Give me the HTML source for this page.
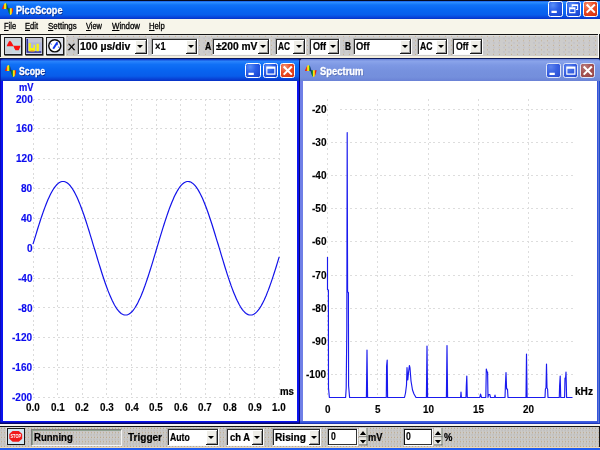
<!DOCTYPE html>
<html lang="en"><head><meta charset="utf-8"><title>PicoScope</title>
<style>
html,body{margin:0;padding:0}
body{width:600px;height:450px;overflow:hidden;position:relative;background:#fff;font-family:"Liberation Sans", sans-serif;-webkit-font-smoothing:antialiased}
.abs,.t,.cb,.tb,.cap,.bar{position:absolute}
.t{white-space:nowrap;transform-origin:0 0;display:block}
#txt{position:absolute;left:0;top:0;width:600px;height:450px;will-change:transform}
.t u{text-decoration:underline;text-underline-offset:1px;text-decoration-thickness:1px}
#title{left:0;top:0;width:600px;height:19.3px;background:linear-gradient(#060a20 0,#060a20 3%,#1a5ce4 5.5%,#2a8cff 13%,#1072f8 26%,#0866f2 50%,#085eec 78%,#0846dc 90%,#0634c8 100%)}
#menu{left:0;top:19.2px;width:600px;height:15.3px;background:#f7f5ea}
#tbar{left:0;top:34px;width:597.8px;height:21.6px;border-top:1px solid #151515;box-sizing:border-box;box-shadow:inset 0 1.3px 0 rgba(255,255,255,.35)}
.dith{background-color:#cbcac8;background-image:radial-gradient(circle at 1.5px 1.3px,#b9a282 0,#b9a282 .45px,rgba(185,162,130,0) .95px),radial-gradient(circle at 1px 3.5px,#b6b6b8 0,#b6b6b8 .4px,rgba(182,182,184,0) .9px);background-size:3px 4.5px,3px 4.5px}
#tbar.dith{background-color:#cdcccb;background-image:radial-gradient(circle at 1.5px 1.3px,#c2ad8e 0,#c2ad8e .4px,rgba(194,173,142,0) .9px),radial-gradient(circle at 4px 3.5px,#bcbcc8 0,#bcbcc8 .4px,rgba(188,188,200,0) .9px);background-size:6px 4.5px,5px 4.5px}
#tsep{left:0;top:55.6px;width:599px;height:2px;background:#f3eedd}
#tr1{left:597.8px;top:35px;width:1.1px;height:22.5px;background:#fbfbfb}
#tr2{left:598.9px;top:34px;width:1.1px;height:24.5px;background:#141414}
#tsep2{left:0;top:57.5px;width:600px;height:3.5px;background:#0c1a5a}
.cb{background:#fff;box-sizing:border-box;border:1px solid;border-color:#a9a9a9 #fbfbfb #fbfbfb #a9a9a9;box-shadow:inset 1px 1px 0 #2b2b2b}
.ed{box-shadow:inset 1px 1px 0 #111,inset -1px -1px 0 #333}
.ab{position:absolute;right:0;top:1px;bottom:0;width:11.3px;background:#efeee8;box-shadow:inset -1px -1px 0 #1a1a1a,inset 1px 1px 0 #fff,inset -2px -2px 0 #9a9a9a}
.ab b{position:absolute;left:2.1px;top:5.5px;width:0;height:0;border:3.3px solid transparent;border-top:3.4px solid #000;border-bottom:0}
.tb{top:37.3px;width:18.2px;height:17.8px;box-sizing:border-box;border:1.4px solid #1a1a1a;background:#dde;box-shadow:.5px .7px 0 #2a2a2a}
.tb svg{display:block}
.win{position:absolute;box-sizing:border-box}
.wt{position:absolute;left:0;top:0;right:0;height:22.5px}
#w1{left:0;top:58.7px;width:299.6px;height:365.3px;background:#0a12ee;border-radius:3px 3px 0 0}
#w1 .wt{background:linear-gradient(#0a2cc0 0,#2a84fc 10%,#1070f6 25%,#0864f0 52%,#085cea 78%,#0840d4 92%,#0830c4 100%);border-radius:3px 3px 0 0}
#w1 .cl{position:absolute;left:2.8px;top:22.2px;width:294px;height:340.6px;background:#fff}
#w2{left:300.2px;top:58.7px;width:299.8px;height:365.3px;background:#6f7fe6;box-shadow:inset -1px 0 0 #2050c8,inset -2px 0 0 #6276da,inset -3.2px -2.7px 0 #3454dc;border-radius:3px 3px 0 0}
#w2 .wt{background:linear-gradient(#6a82d8 0,#8aa4ea 10%,#7d98e4 28%,#7691de 55%,#748fdc 82%,#6a82d6 100%);border-radius:3px 3px 0 0}
#w2 .cl{position:absolute;left:2.9px;top:22.2px;width:293.6px;height:340.6px;background:#fff}
#w1:after{content:"";position:absolute;left:0;right:0;bottom:0;top:0;border-radius:3px 3px 0 0;box-shadow:inset -.9px -1.4px 0 #06066a,inset .6px 0 0 #0a0aa0;pointer-events:none}
#w2:after{content:"";position:absolute;left:0;right:0;bottom:0;height:1.2px;background:#1e36b8}
.cap{border-radius:2.5px;box-sizing:border-box;border:1px solid #fff;overflow:hidden}
.cap svg{display:block;margin:-1px}
.capb{background:radial-gradient(circle at 30% 22%,#5a8ef8 0,#2a5ee8 42%,#1440cc 100%)}
.capx{background:radial-gradient(circle at 30% 22%,#f49474 0,#ec4c24 42%,#d42e0c 100%)}
.capb.ina{background:radial-gradient(circle at 30% 22%,#5c82ee 0,#3a62e2 45%,#2a4cd0 100%);border-color:#dfe6fa}
.capx.ina{background:radial-gradient(circle at 30% 22%,#b87c7c 0,#a45252 45%,#984444 100%);border-color:#dfe6fa}
#gap1{left:0;top:424px;width:600px;height:2px;background:#f7f5ee}
#sline{left:0;top:426px;width:600px;height:1px;background:#141414}
#sbar{left:0;top:427px;width:600px;height:21.3px;box-sizing:border-box;border-right:1.1px solid #141414}
#bot{left:0;top:447.3px;width:600px;height:2.7px;background:linear-gradient(#efd9b4 0,#efd9b4 30%,#1f5cf0 42%,#1f5cf0 100%)}
#run{left:31px;top:429px;width:90.5px;height:17px;box-sizing:border-box;border:1px solid;border-color:#7a7a7a #f4f4f4 #f4f4f4 #7a7a7a;box-shadow:inset 1px 1px 0 #8fa08f}
#stopb{left:7.2px;top:428.2px;width:18.4px;height:17.4px;box-sizing:border-box;border:1.4px solid #161616;background:#d2e6f0;box-shadow:-.6px -.6px 0 #eee;will-change:transform}
#stopb svg{display:block}
</style></head><body>

<div class="bar" id="title"></div>
<svg class="abs" style="left:1.6px;top:2.9px" width="11.6" height="12" viewBox="0 0 11.6 12"><defs><linearGradient id="rg1" x1="0" x2="1" y1="0" y2="0"><stop offset="0" stop-color="#e80c0c"/><stop offset=".22" stop-color="#f02810"/><stop offset=".4" stop-color="#f8e810"/><stop offset=".58" stop-color="#f0e010"/><stop offset=".7" stop-color="#189030"/><stop offset=".86" stop-color="#103090"/><stop offset="1" stop-color="#0a1868"/></linearGradient><linearGradient id="rh1" x1="0" x2="1" y1="0" y2="0"><stop offset="0" stop-color="#0a1868"/><stop offset=".2" stop-color="#106848"/><stop offset=".36" stop-color="#189030"/><stop offset=".48" stop-color="#f8e810"/><stop offset=".64" stop-color="#f8d810"/><stop offset=".8" stop-color="#f02810"/><stop offset="1" stop-color="#e00c0c"/></linearGradient></defs><path d="M0 6 C0.8 3.6 2 0 3.6 0 C5.2 0 6 3.8 6.6 6 Z" fill="url(#rg1)"/><path d="M5.4 5.2 H11.6 C11 8 10.2 11.9 8.6 11.9 C7 11.9 6.2 8.2 5.4 5.2 Z" fill="url(#rh1)"/></svg>
<div class="cap capb" style="left:548.3px;top:1.4px;width:15.2px;height:15.2px"><svg width="15.2" height="15.2" viewBox="0 0 14.5 14.5"><path d="M3.3 9.3 H8.4 V11.4 H3.3 Z" fill="#fff"/></svg></div>
<div class="cap capb" style="left:565.6px;top:1.4px;width:15.2px;height:15.2px"><svg width="15.2" height="15.2" viewBox="0 0 14.5 14.5"><path d="M5.4 3 H11.6 V8.6 H9.6 V7.6 H10.6 V4.8 H6.4 V5.6 H5.4 Z M3 6 H9 V11.6 H3 Z M4 7.8 V10.6 H8 V7.8 Z" fill="#fff" fill-rule="evenodd"/></svg></div>
<div class="cap capx" style="left:583.1px;top:1.4px;width:15.2px;height:15.2px"><svg width="15.2" height="15.2" viewBox="0 0 14.5 14.5"><path d="M3.5 3.3 L11.3 11.1 M11.3 3.3 L3.5 11.1" stroke="#fff" stroke-width="2" stroke-linecap="butt"/></svg></div>
<div class="bar" id="menu"></div>
<div class="bar dith" id="tbar"></div><div class="bar" id="tsep"></div><div class="bar" id="tsep2"></div><div class="bar" id="tr1"></div><div class="bar" id="tr2"></div>
<div class="bar" style="left:0;top:35px;width:66.3px;height:21.3px;background:#f3f3ef"></div><div class="bar" style="left:0;top:35px;width:1px;height:22px;background:#222"></div>
<div class="tb" style="left:4.3px"><svg width="15.8" height="15.4" viewBox="0 0 16 15.5"><rect width="16" height="15.5" fill="#c6d8e0"/><path d="M0 0 H16 V4 H0 Z M0 11 H7 V15.5 H0 Z" fill="#cfd0d6" opacity=".7"/><path d="M1.7 8.2 C2.6 6.6 3.8 3 5 2.8 C6.2 3 7.6 6.4 8.8 8.2 Z" fill="#fa0f0f"/><path d="M8.4 7.7 H15.6 C15.4 9.4 14.6 10.8 13.8 12.3 H10.6 C9.8 11 9 9.4 8.4 7.7 Z" fill="#fa0f0f"/></svg></div>
<div class="tb" style="left:25.3px"><svg width="15.8" height="15.4" viewBox="0 0 16 15.5"><rect width="16" height="15.5" fill="#aeb6de"/><rect x="2" y="0" width="14" height="4.4" fill="#c4c6d4"/><path d="M1.3 1 V14.2 H15.4" stroke="#2c2c98" stroke-width="1.5" fill="none"/><path d="M2.7 13.4 V4.9 H4.9 V13.4 Z M4.9 13.4 V10.2 H7.6 V13.4 Z M7.6 13.4 V6.8 H9.2 V13.4 Z M10.6 13.4 V5.8 H13 V13.4 Z" fill="#f8f410"/><path d="M4.6 13.1 H8" stroke="#f09018" stroke-width="1.1"/></svg></div>
<div class="tb" style="left:46.3px"><svg width="15.8" height="15.4" viewBox="0 0 16 15.5"><rect width="16" height="15.5" fill="#dfe3ec"/><circle cx="7.9" cy="7.9" r="6.1" fill="#fff" stroke="#0c0c0c" stroke-width="1.5"/><path d="M6.3 10.8 L10.6 4.2" stroke="#1038f0" stroke-width="2"/><path d="M3.4 5.6 l1.4 .8 M11.2 9 l1.4 .5 M9.8 6.6 l1.4 .2" stroke="#1038f0" stroke-width=".9"/></svg></div>
<div class="cb" style="left:76.8px;top:37.5px;width:70.8px;height:17.0px"><i class="ab"><b></b></i></div>
<div class="cb" style="left:151.3px;top:37.5px;width:47.1px;height:17.0px"><i class="ab"><b></b></i></div>
<div class="cb" style="left:211.8px;top:37.5px;width:58.2px;height:17.0px"><i class="ab"><b></b></i></div>
<div class="cb" style="left:274.6px;top:37.5px;width:31.2px;height:17.0px"><i class="ab"><b></b></i></div>
<div class="cb" style="left:309.3px;top:37.5px;width:30.5px;height:17.0px"><i class="ab"><b></b></i></div>
<div class="cb" style="left:353.0px;top:37.5px;width:59.0px;height:17.0px"><i class="ab"><b></b></i></div>
<div class="cb" style="left:416.9px;top:37.5px;width:31.3px;height:17.0px"><i class="ab"><b></b></i></div>
<div class="cb" style="left:451.6px;top:37.5px;width:31.0px;height:17.0px"><i class="ab"><b></b></i></div>
<div class="win" id="w1"><div class="wt"></div><div class="cl"></div></div>
<div class="win" id="w2"><div class="wt"></div><div class="cl"></div></div>
<svg class="abs" style="left:4.6px;top:64.5px" width="11.6" height="12" viewBox="0 0 11.6 12"><defs><linearGradient id="rg4" x1="0" x2="1" y1="0" y2="0"><stop offset="0" stop-color="#e80c0c"/><stop offset=".22" stop-color="#f02810"/><stop offset=".4" stop-color="#f8e810"/><stop offset=".58" stop-color="#f0e010"/><stop offset=".7" stop-color="#189030"/><stop offset=".86" stop-color="#103090"/><stop offset="1" stop-color="#0a1868"/></linearGradient><linearGradient id="rh4" x1="0" x2="1" y1="0" y2="0"><stop offset="0" stop-color="#0a1868"/><stop offset=".2" stop-color="#106848"/><stop offset=".36" stop-color="#189030"/><stop offset=".48" stop-color="#f8e810"/><stop offset=".64" stop-color="#f8d810"/><stop offset=".8" stop-color="#f02810"/><stop offset="1" stop-color="#e00c0c"/></linearGradient></defs><path d="M0 6 C0.8 3.6 2 0 3.6 0 C5.2 0 6 3.8 6.6 6 Z" fill="url(#rg4)"/><path d="M5.4 5.2 H11.6 C11 8 10.2 11.9 8.6 11.9 C7 11.9 6.2 8.2 5.4 5.2 Z" fill="url(#rh4)"/></svg>
<svg class="abs" style="left:305.0px;top:64.5px" width="11.6" height="12" viewBox="0 0 11.6 12"><defs><linearGradient id="rg305" x1="0" x2="1" y1="0" y2="0"><stop offset="0" stop-color="#e80c0c"/><stop offset=".22" stop-color="#f02810"/><stop offset=".4" stop-color="#f8e810"/><stop offset=".58" stop-color="#f0e010"/><stop offset=".7" stop-color="#189030"/><stop offset=".86" stop-color="#103090"/><stop offset="1" stop-color="#0a1868"/></linearGradient><linearGradient id="rh305" x1="0" x2="1" y1="0" y2="0"><stop offset="0" stop-color="#0a1868"/><stop offset=".2" stop-color="#106848"/><stop offset=".36" stop-color="#189030"/><stop offset=".48" stop-color="#f8e810"/><stop offset=".64" stop-color="#f8d810"/><stop offset=".8" stop-color="#f02810"/><stop offset="1" stop-color="#e00c0c"/></linearGradient></defs><path d="M0 6 C0.8 3.6 2 0 3.6 0 C5.2 0 6 3.8 6.6 6 Z" fill="url(#rg305)"/><path d="M5.4 5.2 H11.6 C11 8 10.2 11.9 8.6 11.9 C7 11.9 6.2 8.2 5.4 5.2 Z" fill="url(#rh305)"/></svg>
<div class="cap capb" style="left:245.4px;top:63.2px;width:15.2px;height:15.2px"><svg width="15.2" height="15.2" viewBox="0 0 14.5 14.5"><path d="M3.3 9.3 H8.4 V11.4 H3.3 Z" fill="#fff"/></svg></div>
<div class="cap capb" style="left:262.6px;top:63.2px;width:15.2px;height:15.2px"><svg width="15.2" height="15.2" viewBox="0 0 14.5 14.5"><path d="M3.1 3.3 H11.9 V11.2 H3.1 Z M4.2 5.5 V10.1 H10.8 V5.5 Z" fill="#fff" fill-rule="evenodd"/></svg></div>
<div class="cap capx" style="left:280.0px;top:63.2px;width:15.2px;height:15.2px"><svg width="15.2" height="15.2" viewBox="0 0 14.5 14.5"><path d="M3.5 3.3 L11.3 11.1 M11.3 3.3 L3.5 11.1" stroke="#fff" stroke-width="2" stroke-linecap="butt"/></svg></div>
<div class="cap capb ina" style="left:545.6px;top:63.2px;width:15.2px;height:15.2px"><svg width="15.2" height="15.2" viewBox="0 0 14.5 14.5"><path d="M3.3 9.3 H8.4 V11.4 H3.3 Z" fill="#fff"/></svg></div>
<div class="cap capb ina" style="left:562.9px;top:63.2px;width:15.2px;height:15.2px"><svg width="15.2" height="15.2" viewBox="0 0 14.5 14.5"><path d="M3.1 3.3 H11.9 V11.2 H3.1 Z M4.2 5.5 V10.1 H10.8 V5.5 Z" fill="#fff" fill-rule="evenodd"/></svg></div>
<div class="cap capx ina" style="left:580.2px;top:63.2px;width:15.2px;height:15.2px"><svg width="15.2" height="15.2" viewBox="0 0 14.5 14.5"><path d="M3.5 3.3 L11.3 11.1 M11.3 3.3 L3.5 11.1" stroke="#fff" stroke-width="2" stroke-linecap="butt"/></svg></div>
<svg class="abs" style="left:0;top:0" width="600" height="450" viewBox="0 0 600 450"><g stroke="#dbdbdb" stroke-width="1" stroke-dasharray="2,2.9" shape-rendering="crispEdges"><line x1="33.00" y1="99.0" x2="33.00" y2="397.5"/><line x1="33.0" y1="99.00" x2="279.2" y2="99.00"/><line x1="57.62" y1="99.0" x2="57.62" y2="397.5"/><line x1="33.0" y1="128.85" x2="279.2" y2="128.85"/><line x1="82.24" y1="99.0" x2="82.24" y2="397.5"/><line x1="33.0" y1="158.70" x2="279.2" y2="158.70"/><line x1="106.86" y1="99.0" x2="106.86" y2="397.5"/><line x1="33.0" y1="188.55" x2="279.2" y2="188.55"/><line x1="131.48" y1="99.0" x2="131.48" y2="397.5"/><line x1="33.0" y1="218.40" x2="279.2" y2="218.40"/><line x1="156.10" y1="99.0" x2="156.10" y2="397.5"/><line x1="33.0" y1="248.25" x2="279.2" y2="248.25"/><line x1="180.72" y1="99.0" x2="180.72" y2="397.5"/><line x1="33.0" y1="278.10" x2="279.2" y2="278.10"/><line x1="205.34" y1="99.0" x2="205.34" y2="397.5"/><line x1="33.0" y1="307.95" x2="279.2" y2="307.95"/><line x1="229.96" y1="99.0" x2="229.96" y2="397.5"/><line x1="33.0" y1="337.80" x2="279.2" y2="337.80"/><line x1="254.58" y1="99.0" x2="254.58" y2="397.5"/><line x1="33.0" y1="367.65" x2="279.2" y2="367.65"/><line x1="279.20" y1="99.0" x2="279.20" y2="397.5"/><line x1="33.0" y1="397.50" x2="279.2" y2="397.50"/></g><polyline fill="none" stroke="#1212ea" stroke-width="1.2" points="33.0,244.2 34.0,240.9 35.0,237.6 36.0,234.3 37.0,231.0 38.0,227.8 39.0,224.6 40.0,221.5 41.0,218.4 42.0,215.5 43.0,212.6 44.0,209.8 45.0,207.1 46.0,204.5 47.0,202.0 48.0,199.6 49.0,197.4 50.0,195.3 51.0,193.3 52.0,191.5 53.0,189.8 54.0,188.2 55.0,186.8 56.0,185.6 57.0,184.5 58.0,183.6 59.0,182.8 60.0,182.2 61.0,181.8 62.0,181.5 63.0,181.5 64.0,181.5 65.0,181.8 66.0,182.2 67.0,182.8 68.0,183.5 69.0,184.4 70.0,185.5 71.0,186.8 72.0,188.1 73.0,189.7 74.0,191.4 75.0,193.2 76.0,195.2 77.0,197.3 78.0,199.5 79.0,201.9 80.0,204.4 81.0,207.0 82.0,209.7 83.0,212.4 84.0,215.3 85.0,218.3 86.0,221.3 87.0,224.4 88.0,227.6 89.0,230.8 90.0,234.1 91.0,237.4 92.0,240.7 93.0,244.1 94.0,247.4 95.1,250.8 96.1,254.1 97.1,257.5 98.1,260.8 99.1,264.1 100.1,267.3 101.1,270.5 102.1,273.7 103.1,276.7 104.1,279.7 105.1,282.7 106.1,285.5 107.1,288.2 108.1,290.9 109.1,293.4 110.1,295.8 111.1,298.1 112.1,300.3 113.1,302.3 114.1,304.2 115.1,306.0 116.1,307.6 117.1,309.1 118.1,310.4 119.1,311.5 120.1,312.5 121.1,313.4 122.1,314.0 123.1,314.5 124.1,314.9 125.1,315.0 126.1,315.0 127.1,314.9 128.1,314.5 129.1,314.0 130.1,313.3 131.1,312.5 132.1,311.5 133.1,310.3 134.1,309.0 135.1,307.5 136.1,305.9 137.1,304.1 138.1,302.2 139.1,300.1 140.1,298.0 141.1,295.7 142.1,293.2 143.1,290.7 144.1,288.0 145.1,285.3 146.1,282.4 147.1,279.5 148.1,276.5 149.1,273.4 150.1,270.3 151.1,267.1 152.1,263.8 153.1,260.6 154.1,257.2 155.1,253.9 156.1,250.5 157.1,247.2 158.1,243.8 159.1,240.5 160.1,237.1 161.1,233.8 162.1,230.6 163.1,227.4 164.1,224.2 165.1,221.1 166.1,218.1 167.1,215.1 168.1,212.2 169.1,209.4 170.1,206.8 171.1,204.2 172.1,201.7 173.1,199.4 174.1,197.1 175.1,195.0 176.1,193.1 177.1,191.2 178.1,189.6 179.1,188.0 180.1,186.7 181.1,185.4 182.1,184.4 183.1,183.5 184.1,182.7 185.1,182.2 186.1,181.8 187.1,181.5 188.1,181.5 189.1,181.6 190.1,181.8 191.1,182.3 192.1,182.9 193.1,183.6 194.1,184.6 195.1,185.7 196.1,186.9 197.1,188.3 198.1,189.9 199.1,191.6 200.1,193.5 201.1,195.4 202.1,197.6 203.1,199.8 204.1,202.2 205.1,204.7 206.1,207.3 207.1,210.0 208.1,212.8 209.1,215.7 210.1,218.7 211.1,221.7 212.1,224.8 213.1,228.0 214.1,231.2 215.1,234.5 216.1,237.8 217.1,241.1 218.2,244.5 219.2,247.9 220.2,251.2 221.2,254.6 222.2,257.9 223.2,261.2 224.2,264.5 225.2,267.7 226.2,270.9 227.2,274.1 228.2,277.1 229.2,280.1 230.2,283.0 231.2,285.9 232.2,288.6 233.2,291.2 234.2,293.7 235.2,296.1 236.2,298.4 237.2,300.6 238.2,302.6 239.2,304.5 240.2,306.2 241.2,307.8 242.2,309.3 243.2,310.6 244.2,311.7 245.2,312.7 246.2,313.5 247.2,314.1 248.2,314.6 249.2,314.9 250.2,315.0 251.2,315.0 252.2,314.8 253.2,314.5 254.2,313.9 255.2,313.2 256.2,312.4 257.2,311.3 258.2,310.1 259.2,308.8 260.2,307.3 261.2,305.7 262.2,303.9 263.2,301.9 264.2,299.9 265.2,297.7 266.2,295.4 267.2,292.9 268.2,290.4 269.2,287.7 270.2,284.9 271.2,282.1 272.2,279.1 273.2,276.1 274.2,273.0 275.2,269.9 276.2,266.7 277.2,263.4 278.2,260.1 279.2,256.8"/><g stroke="#dddddd" stroke-width="1" stroke-dasharray="2,2.9" shape-rendering="crispEdges"><line x1="327.50" y1="99.0" x2="327.50" y2="397.5"/><line x1="377.75" y1="99.0" x2="377.75" y2="397.5"/><line x1="428.00" y1="99.0" x2="428.00" y2="397.5"/><line x1="478.25" y1="99.0" x2="478.25" y2="397.5"/><line x1="528.50" y1="99.0" x2="528.50" y2="397.5"/><line x1="340.0" y1="109.10" x2="572.5" y2="109.10"/><line x1="330.5" y1="142.29" x2="572.5" y2="142.29"/><line x1="330.5" y1="175.47" x2="572.5" y2="175.47"/><line x1="330.5" y1="208.66" x2="572.5" y2="208.66"/><line x1="330.5" y1="241.85" x2="572.5" y2="241.85"/><line x1="330.5" y1="275.04" x2="572.5" y2="275.04"/><line x1="330.5" y1="308.23" x2="572.5" y2="308.23"/><line x1="330.5" y1="341.41" x2="572.5" y2="341.41"/><line x1="330.5" y1="374.60" x2="572.5" y2="374.60"/></g><polyline fill="none" stroke="#1a1aee" stroke-width="1.15" stroke-linejoin="round" points="327.5,257.0 327.5,289.5 328.4,290.0 328.5,388.0 329.4,397.5 345.6,397.5 346.2,388.0 346.8,330.0 347.2,132.5 347.6,292.0 348.4,292.5 348.6,386.0 349.6,397.5 366.4,397.5 367.0,350.0 367.6,397.5 386.3,397.5 386.6,366.0 387.2,360.0 387.6,397.5 404.5,397.5 405.5,393.0 406.5,385.0 407.0,367.5 407.8,380.0 408.6,372.0 409.4,365.5 410.0,368.0 411.0,381.0 412.5,390.0 414.0,394.0 416.0,397.5 426.4,397.5 427.0,346.0 427.6,397.5 446.4,397.5 447.0,345.5 447.6,397.5 460.6,397.5 461.0,392.0 461.4,397.5 466.0,397.5 466.3,386.0 466.8,376.0 467.3,397.5 479.8,397.5 480.5,394.0 481.5,397.5 485.8,397.5 486.3,369.0 487.0,372.0 487.6,372.0 488.0,397.5 488.5,394.5 489.8,394.5 490.5,397.5 494.5,397.5 495.0,395.0 495.5,397.5 505.0,397.5 505.4,386.0 506.0,372.5 506.6,389.0 507.5,389.0 508.0,397.5 526.0,397.5 526.5,354.0 527.1,397.5 545.0,397.5 545.4,389.0 546.0,388.0 546.5,364.0 547.0,388.0 547.6,389.0 548.0,397.5 559.3,397.5 559.6,386.0 560.2,376.0 560.7,397.5 564.6,397.5 565.0,378.0 565.6,378.0 566.0,372.0 566.6,397.5 572.5,397.5"/></svg>
<div class="bar" id="gap1"></div><div class="bar" id="sline"></div><div class="bar dith" id="sbar"></div><div class="bar" id="bot"></div>
<div class="abs" id="stopb"><svg width="15.6" height="14.6" viewBox="0 0 15.6 14.6"><rect width="15.6" height="14.6" fill="#d2e6f0"/><path d="M4.6 1.9 H10.8 L14.2 4.9 V9.7 L10.8 12.8 H4.6 L1.3 9.7 V4.9 Z" fill="#f01a1a"/><text x="7.8" y="9" font-family="Liberation Sans, sans-serif" font-weight="bold" font-size="4.6" fill="#fff" text-anchor="middle" textLength="10.6" lengthAdjust="spacingAndGlyphs">STOP</text></svg></div><div class="abs" id="run"></div>
<div class="cb" style="left:167.3px;top:428.0px;width:51.3px;height:17.8px"><i class="ab"><b></b></i></div>
<div class="cb" style="left:226.3px;top:428.0px;width:37.5px;height:17.8px"><i class="ab"><b></b></i></div>
<div class="cb" style="left:271.6px;top:428.0px;width:49.3px;height:17.8px"><i class="ab"><b></b></i></div>
<div class="cb ed" style="left:327.3px;top:428.0px;width:31.0px;height:17.8px"></div>
<svg class="abs" style="left:359.2px;top:428.3px" width="8.5" height="17.3" viewBox="0 0 8.5 17.3"><rect x="0" y="0" width="8.5" height="17.3" fill="#e9e8e2"/><path d="M0 8.65 H8.5" stroke="#777" stroke-width=".9"/><path d="M8 0 V17.3" stroke="#6f7a6f" stroke-width="1"/><path d="M0 16.9 H8.5" stroke="#555" stroke-width=".8"/><path d="M0.9 6.9 L4.0 3.1 L7.1 6.9 Z M0.9 11.9 L4.0 15.6 L7.1 11.9 Z" fill="#000"/></svg>
<div class="cb ed" style="left:402.8px;top:428.0px;width:30.5px;height:17.8px"></div>
<svg class="abs" style="left:434.2px;top:428.3px" width="8.5" height="17.3" viewBox="0 0 8.5 17.3"><rect x="0" y="0" width="8.5" height="17.3" fill="#e9e8e2"/><path d="M0 8.65 H8.5" stroke="#777" stroke-width=".9"/><path d="M8 0 V17.3" stroke="#6f7a6f" stroke-width="1"/><path d="M0 16.9 H8.5" stroke="#555" stroke-width=".8"/><path d="M0.9 6.9 L4.0 3.1 L7.1 6.9 Z M0.9 11.9 L4.0 15.6 L7.1 11.9 Z" fill="#000"/></svg>
<div id="txt">
<span class="t" id="t0" style="left:16.00px;top:6.00px;font-size:10.40px;line-height:10.40px;font-weight:bold;color:#fff;transform:scaleX(0.8750);text-shadow:.8px .8px 0 #0a2a8a;-webkit-text-stroke:.3px #fff;">PicoScope</span>
<span class="t" id="t1" style="left:3.70px;top:22.00px;font-size:8.80px;line-height:8.80px;font-weight:normal;color:#000;transform:scaleX(0.8529);-webkit-text-stroke:.3px #000;"><u>F</u>ile</span>
<span class="t" id="t2" style="left:25.00px;top:22.00px;font-size:8.80px;line-height:8.80px;font-weight:normal;color:#000;transform:scaleX(0.8568);-webkit-text-stroke:.3px #000;"><u>E</u>dit</span>
<span class="t" id="t3" style="left:48.00px;top:22.00px;font-size:8.80px;line-height:8.80px;font-weight:normal;color:#000;transform:scaleX(0.9026);-webkit-text-stroke:.3px #000;"><u>S</u>ettings</span>
<span class="t" id="t4" style="left:85.80px;top:22.00px;font-size:8.80px;line-height:8.80px;font-weight:normal;color:#000;transform:scaleX(0.8403);-webkit-text-stroke:.3px #000;"><u>V</u>iew</span>
<span class="t" id="t5" style="left:111.70px;top:22.00px;font-size:8.80px;line-height:8.80px;font-weight:normal;color:#000;transform:scaleX(0.8942);-webkit-text-stroke:.3px #000;"><u>W</u>indow</span>
<span class="t" id="t6" style="left:148.70px;top:22.00px;font-size:8.80px;line-height:8.80px;font-weight:normal;color:#000;transform:scaleX(0.8725);-webkit-text-stroke:.3px #000;"><u>H</u>elp</span>
<span class="t" id="t7" style="left:68.20px;top:42.00px;font-size:9.50px;line-height:9.50px;font-weight:normal;color:#000;transform:scaleX(1.1192);-webkit-text-stroke:.4px #000;">X</span>
<span class="t" id="t8" style="left:80.30px;top:42.00px;font-size:10.00px;line-height:10.00px;font-weight:bold;color:#000;transform:scaleX(1.0476);-webkit-text-stroke:.22px currentColor;">100 µs/div</span>
<span class="t" id="t9" style="left:155.00px;top:42.00px;font-size:10.00px;line-height:10.00px;font-weight:bold;color:#000;transform:scaleX(0.9205);-webkit-text-stroke:.22px currentColor;">×1</span>
<span class="t" id="t10" style="left:204.50px;top:42.00px;font-size:10.00px;line-height:10.00px;font-weight:bold;color:#000;transform:scaleX(0.8708);-webkit-text-stroke:.22px currentColor;">A</span>
<span class="t" id="t11" style="left:215.60px;top:42.00px;font-size:10.00px;line-height:10.00px;font-weight:bold;color:#000;transform:scaleX(1.0218);-webkit-text-stroke:.22px currentColor;">±200 mV</span>
<span class="t" id="t12" style="left:278.00px;top:42.00px;font-size:10.00px;line-height:10.00px;font-weight:bold;color:#000;transform:scaleX(0.8303);-webkit-text-stroke:.22px currentColor;">AC</span>
<span class="t" id="t13" style="left:313.00px;top:42.00px;font-size:10.00px;line-height:10.00px;font-weight:bold;color:#000;transform:scaleX(0.8995);-webkit-text-stroke:.22px currentColor;">Off</span>
<span class="t" id="t14" style="left:345.00px;top:42.00px;font-size:10.00px;line-height:10.00px;font-weight:bold;color:#000;transform:scaleX(0.8294);-webkit-text-stroke:.22px currentColor;">B</span>
<span class="t" id="t15" style="left:356.00px;top:42.00px;font-size:10.00px;line-height:10.00px;font-weight:bold;color:#000;transform:scaleX(0.9341);-webkit-text-stroke:.22px currentColor;">Off</span>
<span class="t" id="t16" style="left:420.00px;top:42.00px;font-size:10.00px;line-height:10.00px;font-weight:bold;color:#000;transform:scaleX(0.8649);-webkit-text-stroke:.22px currentColor;">AC</span>
<span class="t" id="t17" style="left:455.50px;top:42.00px;font-size:10.00px;line-height:10.00px;font-weight:bold;color:#000;transform:scaleX(0.8649);-webkit-text-stroke:.22px currentColor;">Off</span>
<span class="t" id="t18" style="left:19.30px;top:67.00px;font-size:10.40px;line-height:10.40px;font-weight:bold;color:#fff;transform:scaleX(0.8401);text-shadow:.8px .8px 0 #0a2a8a;-webkit-text-stroke:.3px #fff;">Scope</span>
<span class="t" id="t19" style="left:319.50px;top:67.00px;font-size:10.40px;line-height:10.40px;font-weight:bold;color:#fff;transform:scaleX(0.9074);text-shadow:.8px .8px 0 #5a72b8;-webkit-text-stroke:.3px #fff;">Spectrum</span>
<span class="t" id="t20" style="left:34.20px;top:433.00px;font-size:10.00px;line-height:10.00px;font-weight:bold;color:#000;transform:scaleX(0.9569);-webkit-text-stroke:.22px currentColor;">Running</span>
<span class="t" id="t21" style="left:128.00px;top:433.00px;font-size:10.00px;line-height:10.00px;font-weight:bold;color:#000;transform:scaleX(1.0028);-webkit-text-stroke:.22px currentColor;">Trigger</span>
<span class="t" id="t22" style="left:170.30px;top:433.00px;font-size:10.00px;line-height:10.00px;font-weight:bold;color:#000;transform:scaleX(0.8647);-webkit-text-stroke:.22px currentColor;">Auto</span>
<span class="t" id="t23" style="left:229.60px;top:433.00px;font-size:10.00px;line-height:10.00px;font-weight:bold;color:#000;transform:scaleX(0.9384);-webkit-text-stroke:.22px currentColor;">ch A</span>
<span class="t" id="t24" style="left:275.00px;top:433.00px;font-size:10.00px;line-height:10.00px;font-weight:bold;color:#000;transform:scaleX(1.0143);-webkit-text-stroke:.22px currentColor;">Rising</span>
<span class="t" id="t25" style="left:331.40px;top:431.00px;font-size:10.60px;line-height:10.60px;font-weight:bold;color:#000;transform:scaleX(0.8127);-webkit-text-stroke:.22px currentColor;">0</span>
<span class="t" id="t26" style="left:368.30px;top:433.00px;font-size:10.00px;line-height:10.00px;font-weight:bold;color:#000;transform:scaleX(0.9253);-webkit-text-stroke:.22px currentColor;">mV</span>
<span class="t" id="t27" style="left:406.40px;top:431.00px;font-size:10.60px;line-height:10.60px;font-weight:bold;color:#000;transform:scaleX(0.8127);-webkit-text-stroke:.22px currentColor;">0</span>
<span class="t" id="t28" style="left:443.60px;top:433.00px;font-size:10.00px;line-height:10.00px;font-weight:bold;color:#000;transform:scaleX(0.9432);-webkit-text-stroke:.22px currentColor;">%</span>
<span class="t" id="t29" style="left:15.50px;top:94.00px;font-size:11.00px;line-height:11.00px;font-weight:bold;color:#0c0cee;transform:scaleX(0.9151);-webkit-text-stroke:.15px currentColor;">200</span>
<span class="t" id="t30" style="left:15.50px;top:123.00px;font-size:11.00px;line-height:11.00px;font-weight:bold;color:#0c0cee;transform:scaleX(0.9151);-webkit-text-stroke:.15px currentColor;">160</span>
<span class="t" id="t31" style="left:15.50px;top:153.00px;font-size:11.00px;line-height:11.00px;font-weight:bold;color:#0c0cee;transform:scaleX(0.9151);-webkit-text-stroke:.15px currentColor;">120</span>
<span class="t" id="t32" style="left:21.10px;top:183.00px;font-size:11.00px;line-height:11.00px;font-weight:bold;color:#0c0cee;transform:scaleX(0.9143);-webkit-text-stroke:.15px currentColor;">80</span>
<span class="t" id="t33" style="left:21.10px;top:213.00px;font-size:11.00px;line-height:11.00px;font-weight:bold;color:#0c0cee;transform:scaleX(0.9143);-webkit-text-stroke:.15px currentColor;">40</span>
<span class="t" id="t34" style="left:26.70px;top:243.00px;font-size:11.00px;line-height:11.00px;font-weight:bold;color:#0c0cee;transform:scaleX(0.9143);-webkit-text-stroke:.15px currentColor;">0</span>
<span class="t" id="t35" style="left:17.80px;top:273.00px;font-size:11.00px;line-height:11.00px;font-weight:bold;color:#0c0cee;transform:scaleX(0.9116);-webkit-text-stroke:.15px currentColor;">-40</span>
<span class="t" id="t36" style="left:17.80px;top:303.00px;font-size:11.00px;line-height:11.00px;font-weight:bold;color:#0c0cee;transform:scaleX(0.9116);-webkit-text-stroke:.15px currentColor;">-80</span>
<span class="t" id="t37" style="left:12.20px;top:332.00px;font-size:11.00px;line-height:11.00px;font-weight:bold;color:#0c0cee;transform:scaleX(0.9123);-webkit-text-stroke:.15px currentColor;">-120</span>
<span class="t" id="t38" style="left:12.20px;top:362.00px;font-size:11.00px;line-height:11.00px;font-weight:bold;color:#0c0cee;transform:scaleX(0.9123);-webkit-text-stroke:.15px currentColor;">-160</span>
<span class="t" id="t39" style="left:12.20px;top:392.00px;font-size:11.00px;line-height:11.00px;font-weight:bold;color:#0c0cee;transform:scaleX(0.9123);-webkit-text-stroke:.15px currentColor;">-200</span>
<span class="t" id="t40" style="left:18.50px;top:82.00px;font-size:10.50px;line-height:10.50px;font-weight:bold;color:#0c0cee;transform:scaleX(0.8872);-webkit-text-stroke:.22px currentColor;">mV</span>
<span class="t" id="t41" style="left:26.15px;top:402.00px;font-size:11.00px;line-height:11.00px;font-weight:bold;color:#000;transform:scaleX(0.8956);-webkit-text-stroke:.15px currentColor;">0.0</span>
<span class="t" id="t42" style="left:50.77px;top:402.00px;font-size:11.00px;line-height:11.00px;font-weight:bold;color:#000;transform:scaleX(0.8956);-webkit-text-stroke:.15px currentColor;">0.1</span>
<span class="t" id="t43" style="left:75.39px;top:402.00px;font-size:11.00px;line-height:11.00px;font-weight:bold;color:#000;transform:scaleX(0.8956);-webkit-text-stroke:.15px currentColor;">0.2</span>
<span class="t" id="t44" style="left:100.01px;top:402.00px;font-size:11.00px;line-height:11.00px;font-weight:bold;color:#000;transform:scaleX(0.8956);-webkit-text-stroke:.15px currentColor;">0.3</span>
<span class="t" id="t45" style="left:124.63px;top:402.00px;font-size:11.00px;line-height:11.00px;font-weight:bold;color:#000;transform:scaleX(0.8956);-webkit-text-stroke:.15px currentColor;">0.4</span>
<span class="t" id="t46" style="left:149.25px;top:402.00px;font-size:11.00px;line-height:11.00px;font-weight:bold;color:#000;transform:scaleX(0.8956);-webkit-text-stroke:.15px currentColor;">0.5</span>
<span class="t" id="t47" style="left:173.87px;top:402.00px;font-size:11.00px;line-height:11.00px;font-weight:bold;color:#000;transform:scaleX(0.8956);-webkit-text-stroke:.15px currentColor;">0.6</span>
<span class="t" id="t48" style="left:198.49px;top:402.00px;font-size:11.00px;line-height:11.00px;font-weight:bold;color:#000;transform:scaleX(0.8956);-webkit-text-stroke:.15px currentColor;">0.7</span>
<span class="t" id="t49" style="left:223.11px;top:402.00px;font-size:11.00px;line-height:11.00px;font-weight:bold;color:#000;transform:scaleX(0.8956);-webkit-text-stroke:.15px currentColor;">0.8</span>
<span class="t" id="t50" style="left:247.73px;top:402.00px;font-size:11.00px;line-height:11.00px;font-weight:bold;color:#000;transform:scaleX(0.8956);-webkit-text-stroke:.15px currentColor;">0.9</span>
<span class="t" id="t51" style="left:272.35px;top:402.00px;font-size:11.00px;line-height:11.00px;font-weight:bold;color:#000;transform:scaleX(0.8956);-webkit-text-stroke:.15px currentColor;">1.0</span>
<span class="t" id="t52" style="left:280.00px;top:386.00px;font-size:10.50px;line-height:10.50px;font-weight:bold;color:#000;transform:scaleX(0.9218);-webkit-text-stroke:.22px currentColor;">ms</span>
<span class="t" id="t53" style="left:311.50px;top:104.00px;font-size:11.00px;line-height:11.00px;font-weight:bold;color:#000;transform:scaleX(0.9116);-webkit-text-stroke:.15px currentColor;">-20</span>
<span class="t" id="t54" style="left:311.50px;top:137.00px;font-size:11.00px;line-height:11.00px;font-weight:bold;color:#000;transform:scaleX(0.9116);-webkit-text-stroke:.15px currentColor;">-30</span>
<span class="t" id="t55" style="left:311.50px;top:170.00px;font-size:11.00px;line-height:11.00px;font-weight:bold;color:#000;transform:scaleX(0.9116);-webkit-text-stroke:.15px currentColor;">-40</span>
<span class="t" id="t56" style="left:311.50px;top:203.00px;font-size:11.00px;line-height:11.00px;font-weight:bold;color:#000;transform:scaleX(0.9116);-webkit-text-stroke:.15px currentColor;">-50</span>
<span class="t" id="t57" style="left:311.50px;top:236.00px;font-size:11.00px;line-height:11.00px;font-weight:bold;color:#000;transform:scaleX(0.9116);-webkit-text-stroke:.15px currentColor;">-60</span>
<span class="t" id="t58" style="left:311.50px;top:270.00px;font-size:11.00px;line-height:11.00px;font-weight:bold;color:#000;transform:scaleX(0.9116);-webkit-text-stroke:.15px currentColor;">-70</span>
<span class="t" id="t59" style="left:311.50px;top:303.00px;font-size:11.00px;line-height:11.00px;font-weight:bold;color:#000;transform:scaleX(0.9116);-webkit-text-stroke:.15px currentColor;">-80</span>
<span class="t" id="t60" style="left:311.50px;top:336.00px;font-size:11.00px;line-height:11.00px;font-weight:bold;color:#000;transform:scaleX(0.9116);-webkit-text-stroke:.15px currentColor;">-90</span>
<span class="t" id="t61" style="left:305.90px;top:369.00px;font-size:11.00px;line-height:11.00px;font-weight:bold;color:#000;transform:scaleX(0.9123);-webkit-text-stroke:.15px currentColor;">-100</span>
<span class="t" id="t62" style="left:325.05px;top:404.00px;font-size:11.00px;line-height:11.00px;font-weight:bold;color:#000;transform:scaleX(0.8980);-webkit-text-stroke:.15px currentColor;">0</span>
<span class="t" id="t63" style="left:375.30px;top:404.00px;font-size:11.00px;line-height:11.00px;font-weight:bold;color:#000;transform:scaleX(0.8980);-webkit-text-stroke:.15px currentColor;">5</span>
<span class="t" id="t64" style="left:422.80px;top:404.00px;font-size:11.00px;line-height:11.00px;font-weight:bold;color:#000;transform:scaleX(0.8980);-webkit-text-stroke:.15px currentColor;">10</span>
<span class="t" id="t65" style="left:473.05px;top:404.00px;font-size:11.00px;line-height:11.00px;font-weight:bold;color:#000;transform:scaleX(0.8980);-webkit-text-stroke:.15px currentColor;">15</span>
<span class="t" id="t66" style="left:523.30px;top:404.00px;font-size:11.00px;line-height:11.00px;font-weight:bold;color:#000;transform:scaleX(0.8980);-webkit-text-stroke:.15px currentColor;">20</span>
<span class="t" id="t67" style="left:574.50px;top:386.00px;font-size:10.50px;line-height:10.50px;font-weight:bold;color:#000;transform:scaleX(0.9632);-webkit-text-stroke:.22px currentColor;">kHz</span>
</div>
</body></html>
